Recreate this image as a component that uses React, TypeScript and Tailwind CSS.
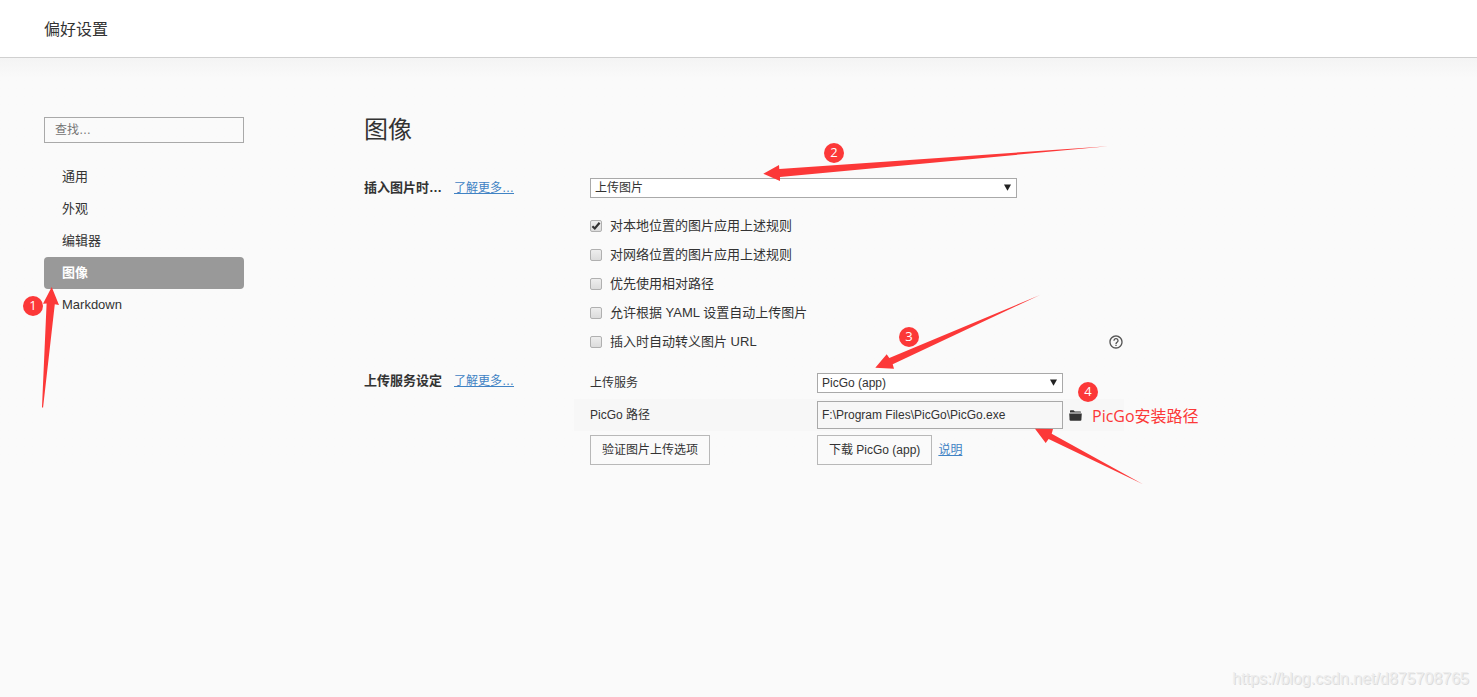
import React, { useState } from "react";
import { MdHelpOutline } from "react-icons/md";

const menuItems = ["通用", "外观", "编辑器", "图像", "Markdown"];

const imageRules = [
  { id: "local", label: "对本地位置的图片应用上述规则", checked: true },
  { id: "network", label: "对网络位置的图片应用上述规则", checked: false },
  { id: "relative", label: "优先使用相对路径", checked: false },
  { id: "yaml", label: "允许根据 YAML 设置自动上传图片", checked: false },
  { id: "escape", label: "插入时自动转义图片 URL", checked: false, help: true },
];

const FolderIcon: React.FC = () => (
  <svg width="13" height="11" viewBox="0 0 13 11" fill="#333">
    <path d="M1 2.6V.9Q1 .3 1.6.3H4.6L5.8 1.4H11.4Q12 1.4 12 2V2.6Z" />
    <path d="M.2 3.5H12.8L12.4 9.9Q12.3 10.7 11.5 10.7H1.5Q.7 10.7.6 9.9Z" />
  </svg>
);

interface SelectBoxProps {
  label: string;
  options: string[];
}

const SelectBox: React.FC<SelectBoxProps> = ({ label, options }) => (
  <div className="relative">
    <select
      aria-label={label}
      className="block h-5 w-full appearance-none rounded-none border border-[#a9a9a9] bg-white px-1 text-xs leading-4 text-[#333]"
    >
      {options.map((option) => (
        <option key={option}>{option}</option>
      ))}
    </select>
    <svg
      className="pointer-events-none absolute top-1.5 right-1.5"
      width="7"
      height="7"
      viewBox="0 0 7 7"
      fill="#222"
    >
      <path d="M0 .5H7L3.5 6.8Z" />
    </svg>
  </div>
);

const MoreLink: React.FC<{ text: string }> = ({ text }) => (
  <a href="#" className="text-xs leading-5 text-[#4183c4] underline">
    {text}
  </a>
);

const Badge: React.FC<{ value: number; className: string }> = ({ value, className }) => (
  <span
    className={`absolute flex size-5 items-center justify-center rounded-full bg-[#fc3838] font-['Open_Sans',sans-serif] text-[13px] text-white ${className}`}
  >
    {value}
  </span>
);

// Red arrows and step numbers drawn on top of the settings page
const Annotations: React.FC = () => (
  <div className="pointer-events-none absolute inset-0 overflow-hidden">
    <svg className="absolute top-0 left-0" width="1200" height="500" fill="#fc3838">
      <path d="M51.7 287L59 305L54.8 304.3L43 408L42 407L46.6 303.4L43 303.7Z" />
      <path d="M763.3 173.7L779 165L779.3 169L1108 146.2L780 177L780 181Z" />
      <path d="M875.3 367.8L886.7 354.3L889.3 358L1040 295L892.7 364.3L894 368.8Z" />
      <path d="M1035 428.7L1053 429L1051.7 433.7L1143 484.3L1048.6 439L1045.7 443Z" />
    </svg>
    <Badge value={1} className="top-[296px] left-[23px]" />
    <Badge value={2} className="top-[143px] left-[824px]" />
    <Badge value={3} className="top-[327px] left-[899px]" />
    <Badge value={4} className="top-[382px] left-[1078px]" />
    <span className="absolute top-[404px] left-[1092px] font-['Open_Sans','Noto_Sans_CJK_SC',sans-serif] text-base leading-6 whitespace-nowrap text-[#fc3838]">
      PicGo安装路径
    </span>
    <span className="absolute right-2 bottom-2 text-base leading-5 text-[#ededed] [text-shadow:1px_1px_0_#dcdcdc]">
      https://blog.csdn.net/d875708765
    </span>
  </div>
);

const App: React.FC = () => {
  const [active, setActive] = useState("图像");
  const [search, setSearch] = useState("");
  const [path, setPath] = useState("F:\\Program Files\\PicGo\\PicGo.exe");

  return (
    <div className="relative min-h-screen bg-[#fafafa] font-['Liberation_Sans','Noto_Sans_CJK_SC',sans-serif] text-[13px] text-[#333]">
      <header className="border-b border-[#d0d0d0] bg-white px-11 pt-[18px] pb-[15px]">
        <h1 className="text-base leading-6 font-normal">偏好设置</h1>
      </header>

      <div className="flex gap-[120px] bg-linear-to-b from-[#f4f4f4] to-[#fafafa] to-[20px] px-11 pt-[59px]">
        <aside className="w-[200px] shrink-0">
          <input
            type="text"
            aria-label="查找"
            placeholder="查找…"
            value={search}
            onChange={(e) => setSearch(e.target.value)}
            className="block h-[26px] w-full border border-[#a9a9a9] px-2.5 text-xs placeholder:text-[#757575]"
          />
          <nav className="mt-[18px] flex flex-col">
            {menuItems.map((item) => (
              <button
                key={item}
                onClick={() => setActive(item)}
                className={
                  item === active
                    ? "h-8 rounded bg-[#999] px-[18px] text-left font-bold text-white"
                    : "h-8 px-[18px] text-left"
                }
              >
                {item}
              </button>
            ))}
          </nav>
        </aside>

        <main className="max-w-[760px] flex-1">
          <h2 className="text-2xl leading-[26px] font-normal">图像</h2>

          <section className="mt-[35px] grid grid-cols-[210px_1fr]">
            <div className="flex gap-3">
              <h3 className="leading-5 font-bold">插入图片时…</h3>
              <MoreLink text="了解更多…" />
            </div>
            <div className="pl-4">
              <div className="max-w-[427px]">
                <SelectBox label="插入图片时" options={["上传图片", "无特殊操作"]} />
              </div>
              <div className="mt-[13px] flex flex-col">
                {imageRules.map((rule) => (
                  <div key={rule.id} className="flex h-[29px] items-center gap-2">
                    <span className="relative size-3">
                      <input
                        type="checkbox"
                        id={rule.id}
                        defaultChecked={rule.checked}
                        className="peer block size-3 appearance-none rounded-xs border border-[#b0b0b0] bg-linear-to-b from-[#eee] to-[#dcdcdc]"
                      />
                      <svg
                        className="pointer-events-none absolute inset-0 hidden peer-checked:block"
                        width="12"
                        height="12"
                        viewBox="0 0 12 12"
                        fill="none"
                        stroke="#333"
                        strokeWidth="2.2"
                      >
                        <path d="M2.4 6.2L4.8 8.5L9.6 2.8" />
                      </svg>
                    </span>
                    <label htmlFor={rule.id}>{rule.label}</label>
                    {rule.help && (
                      <button aria-label="帮助" className="ml-auto text-[#555]">
                        <MdHelpOutline size={16} />
                      </button>
                    )}
                  </div>
                ))}
              </div>
            </div>
          </section>

          <section className="mt-2.5 grid grid-cols-[210px_1fr]">
            <div className="flex gap-3 pt-[5px]">
              <h3 className="leading-5 font-bold">上传服务设定</h3>
              <MoreLink text="了解更多…" />
            </div>
            <div className="text-xs">
              <div className="grid h-[33px] grid-cols-[227px_246px] items-center pl-4">
                <span>上传服务</span>
                <SelectBox label="上传服务" options={["PicGo (app)", "iPic"]} />
              </div>
              <div className="grid h-8 grid-cols-[227px_246px_auto] items-center bg-[#f7f7f7] pl-4">
                <label htmlFor="picgo-path">PicGo 路径</label>
                <input
                  id="picgo-path"
                  type="text"
                  value={path}
                  onChange={(e) => setPath(e.target.value)}
                  className="h-7 w-full border border-[#a9a9a9] px-1"
                />
                <button aria-label="选择文件夹" className="w-fit pl-1.5">
                  <FolderIcon />
                </button>
              </div>
              <div className="mt-1 grid grid-cols-[227px_auto] pl-4">
                <button className="h-[30px] w-fit border border-[#b8b8b8] px-[11px]">
                  验证图片上传选项
                </button>
                <div className="flex items-center gap-1.5">
                  <button className="h-[30px] border border-[#b8b8b8] px-[11px]">
                    下载 PicGo (app)
                  </button>
                  <MoreLink text="说明" />
                </div>
              </div>
            </div>
          </section>
        </main>
      </div>

      <Annotations />
    </div>
  );
};

export default App;
